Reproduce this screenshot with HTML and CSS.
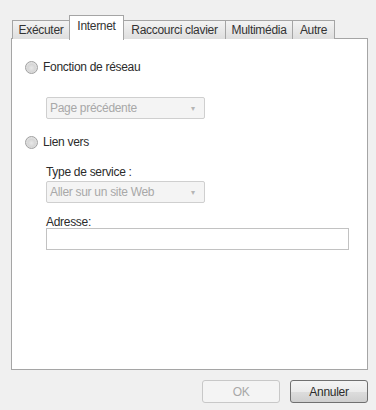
FILE: index.html
```html
<!DOCTYPE html>
<html lang="fr">
<head>
<meta charset="utf-8">
<title>Internet</title>
<link rel="stylesheet" href="styles.css">
</head>
<body>
<div class="dialog">
  <div class="tabs">
    <div class="tab t1">Exécuter</div>
    <div class="tab active t2">Internet</div>
    <div class="tab t3">Raccourci clavier</div>
    <div class="tab t4">Multimédia</div>
    <div class="tab t5">Autre</div>
  </div>
  <div class="panel">
    <div class="radio-row first">
      <span class="radio"></span><span class="label">Fonction de réseau</span>
    </div>
    <div class="select s1"><span>Page précédente</span><span class="arrow">▾</span></div>
    <div class="radio-row second">
      <span class="radio"></span><span class="label">Lien vers</span>
    </div>
    <div class="field-label l1">Type de service :</div>
    <div class="select s2"><span>Aller sur un site Web</span><span class="arrow">▾</span></div>
    <div class="field-label l2">Adresse:</div>
    <div class="textbox"></div>
  </div>
  <div class="buttons">
    <div class="btn disabled">OK</div>
    <div class="btn">Annuler</div>
  </div>
</div>
</body>
</html>
```

FILE: styles.css
```css
html, body {
  margin: 0;
  padding: 0;
  background: #f0f0f0;
}
body {
  font-family: "Liberation Sans", Arial, sans-serif;
  font-size: 12px;
  color: #2b2b2b;
  letter-spacing: -0.3px;
  width: 376px;
  height: 410px;
  overflow: hidden;
}
.dialog {
  padding: 15px 0 0 11px;
}
.tabs {
  display: flex;
  align-items: flex-end;
  height: 24px;
  position: relative;
  z-index: 2;
}
.tab {
  box-sizing: border-box;
  height: 19px;
  border: 1px solid #a5a5a5;
  border-bottom: none;
  border-right: none;
  background: linear-gradient(#f3f3f3, #dedede);
  display: flex;
  align-items: center;
  justify-content: center;
  color: #333333;
}
.t1 { width: 57px; margin-left: 1px; }
.t2 { width: 55px; }
.t3 { width: 102px; }
.t4 { width: 67px; }
.t5 { width: 43px; border-right: 1px solid #a5a5a5; }
.tab.active {
  height: 25px;
  background: #ffffff;
  border-right: 1px solid #a5a5a5;
  margin-right: -1px;
  padding-bottom: 4px;
  margin-bottom: -1px;
}
.panel {
  box-sizing: border-box;
  width: 357px;
  height: 332px;
  margin-top: -1px;
  border: 1px solid #a5a5a5;
  background: #ffffff;
  display: flex;
  flex-direction: column;
  align-items: flex-start;
  position: relative;
  z-index: 1;
}
.radio-row {
  display: flex;
  align-items: center;
  height: 16px;
  margin-left: 13px;
}
.radio-row.first { margin-top: 20px; }
.radio-row.second { margin-top: 15px; }
.radio {
  box-sizing: border-box;
  width: 13px;
  height: 13px;
  border-radius: 50%;
  border: 1px solid #a0a0a0;
  background: radial-gradient(circle at 50% 55%, #e8e8e8 0, #d6d6d6 45%, #f2f2f2 100%);
  margin-right: 5px;
}
.select {
  box-sizing: border-box;
  width: 159px;
  height: 22px;
  margin-left: 34px;
  border: 1px solid #cfcfcf;
  border-radius: 2px;
  background: #f4f4f4;
  color: #a8a8a8;
  display: flex;
  align-items: center;
  justify-content: space-between;
  padding: 0 9px 0 3px;
}
.select.s1 { margin-top: 22px; }
.select.s2 { margin-top: 1px; }
.arrow {
  font-size: 8px;
  color: #b5b5b5;
}
.field-label {
  height: 16px;
  line-height: 16px;
  margin-left: 34px;
}
.field-label.l1 { margin-top: 14px; }
.field-label.l2 { margin-top: 11px; }
.textbox {
  box-sizing: border-box;
  width: 303px;
  height: 22px;
  margin-left: 34px;
  margin-top: -2px;
  border: 1px solid #c2c2c2;
  background: #ffffff;
}
.buttons {
  display: flex;
  justify-content: flex-end;
  gap: 10px;
  width: 357px;
  margin-top: 10px;
}
.btn {
  box-sizing: border-box;
  width: 78px;
  height: 23px;
  border: 1px solid #707070;
  border-radius: 3px;
  background: linear-gradient(#f4f4f4 0, #ebebeb 50%, #dddddd 51%, #cfcfcf 100%);
  display: flex;
  align-items: center;
  justify-content: center;
  color: #2b2b2b;
}
.btn.disabled {
  border-color: #c8c8c8;
  background: #f4f4f4;
  color: #a8a8a8;
}
```
